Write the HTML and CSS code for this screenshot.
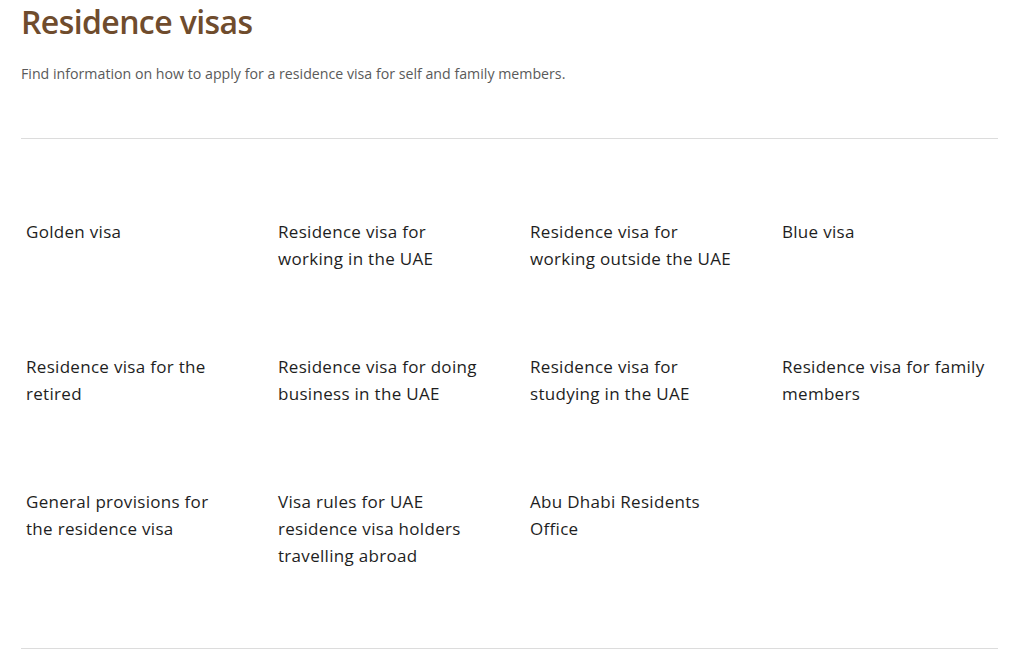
FILE: index.html
```html
<!DOCTYPE html>
<html lang="en">
<head>
  <meta charset="UTF-8">
  <title>Residence visas</title>
  <meta name="viewport" content="width=device-width, initial-scale=1">
  <link rel="stylesheet" href="styles.css">
</head>
<body>
  <main class="page">
    <h1>Residence visas</h1>
    <p class="lead">Find information on how to apply for a residence visa for self and family members.</p>

    <ul class="visa-grid">
      <li><a href="#">Golden visa</a></li>
      <li><a href="#">Residence visa for working in the UAE</a></li>
      <li><a href="#">Residence visa for working outside the UAE</a></li>
      <li><a href="#">Blue visa</a></li>
      <li><a href="#">Residence visa for the retired</a></li>
      <li><a href="#">Residence visa for doing business in the UAE</a></li>
      <li><a href="#">Residence visa for studying in the UAE</a></li>
      <li><a href="#">Residence visa for family members</a></li>
      <li><a href="#">General provisions for the residence visa</a></li>
      <li><a href="#">Visa rules for UAE residence visa holders travelling abroad</a></li>
      <li><a href="#">Abu Dhabi Residents Office</a></li>
    </ul>
  </main>
</body>
</html>
```

FILE: styles.css
```css
:root {
  --brown: #6f4c2d;
  --text: #1e1e1e;
  --muted: #5a5a5a;
  --rule: #dcdcdc;
}
*, *::before, *::after { box-sizing: border-box; }
body {
  margin: 0;
  background: #fff;
  font-family: 'Open Sans', 'Liberation Sans', sans-serif;
  color: var(--text);
}
.page {
  width: 977px;
  margin-left: 21px;
}
h1 {
  margin: 0;
  padding-top: 3px;
  font-size: 32px;
  font-weight: 600;
  line-height: 38px;
  color: var(--brown);
  letter-spacing: -0.6px;
}
.lead {
  margin: 22px 0 0;
  padding-bottom: 53px;
  font-size: 14.2px;
  line-height: 22px;
  color: var(--muted);
  border-bottom: 1px solid var(--rule);
}
.visa-grid {
  list-style: none;
  margin: 0;
  padding: 39px 0 38px;
  display: grid;
  grid-template-columns: repeat(4, 232px);
  column-gap: 20px;
  border-bottom: 1px solid var(--rule);
}
.visa-grid li {
  padding: 40px 5px 41px;
}
.visa-grid a {
  display: block;
  max-width: 212px;
  font-size: 17px;
  line-height: 27px;
  letter-spacing: 0.3px;
  color: var(--text);
  text-decoration: none;
}
```
